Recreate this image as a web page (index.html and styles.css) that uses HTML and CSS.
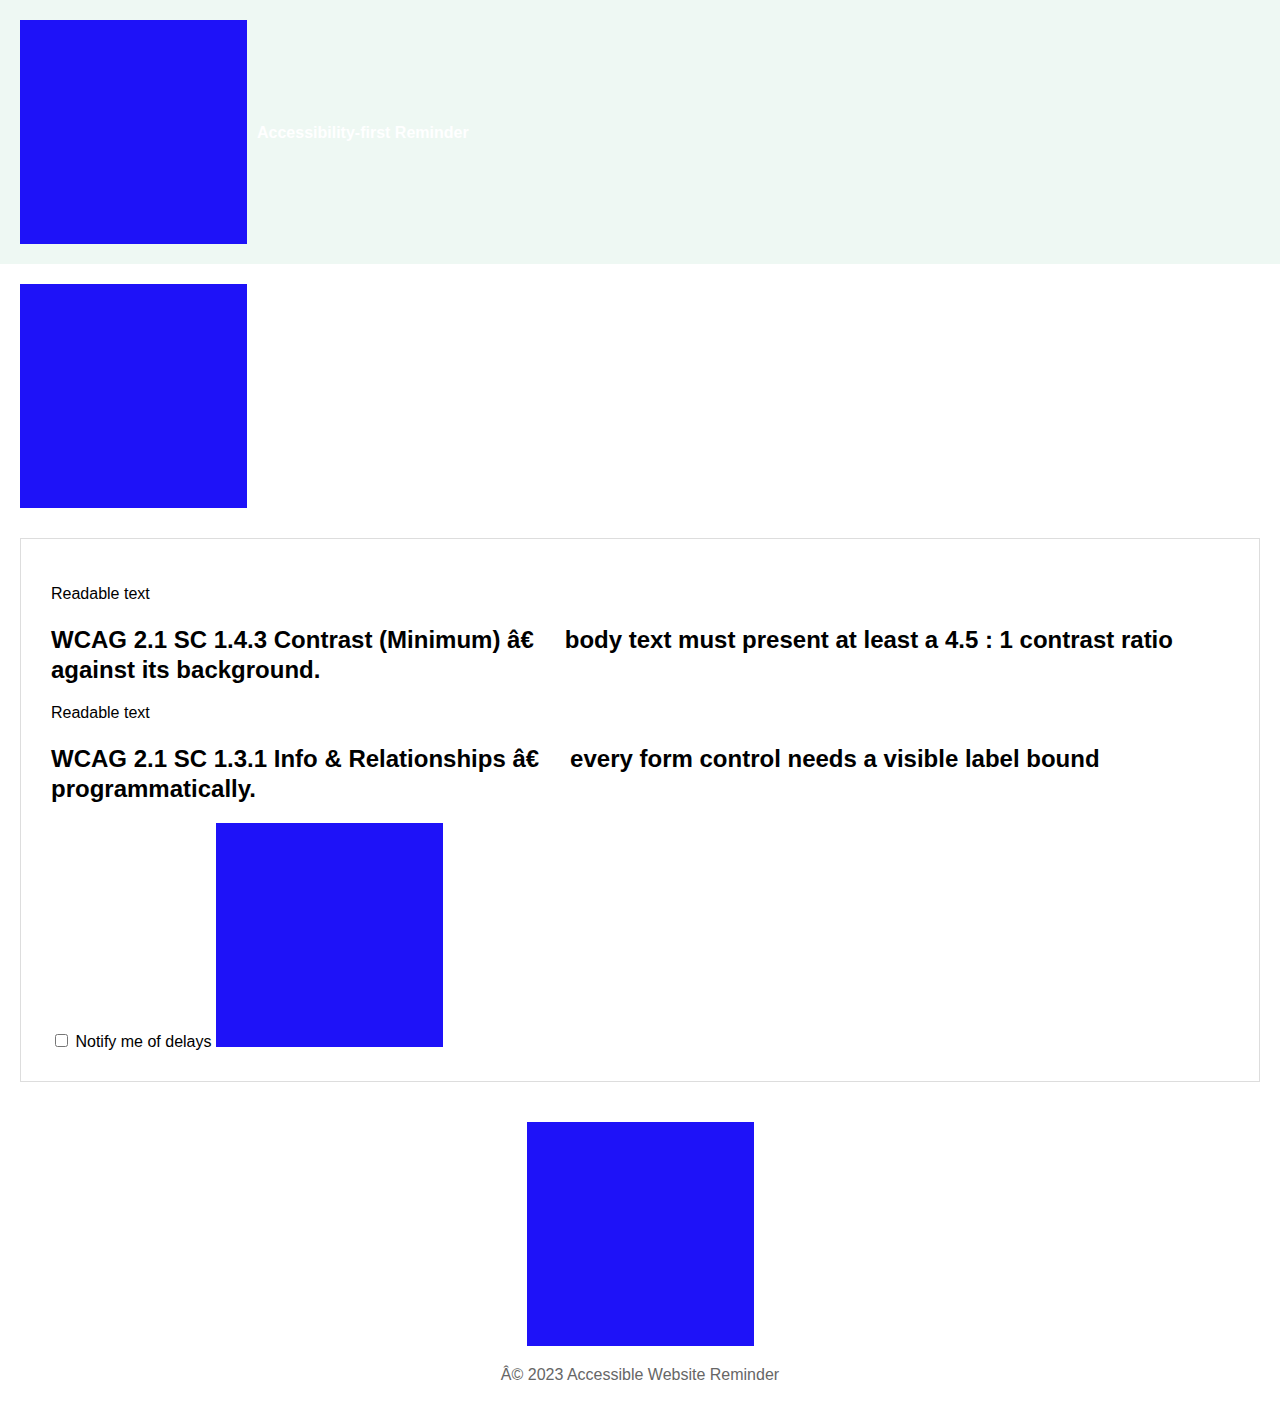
FILE: index.html
```html
<!DOCTYPE html>
<html lang="en">
<head>
<meta charset="utf-8">
<title>Accessible Website Reminder</title>
<link rel="stylesheet" href="styles.css">
</head>
<body>
<header class="site-header">
  <svg class="ph" width="227" height="224" viewBox="0 0 227 224" aria-hidden="true"><rect width="227" height="224" fill="#1e12f8"/></svg>
  <h1 class="title">Accessibility-first Reminder</h1>
</header>
<main class="main">
  <svg class="ph block" width="227" height="224" viewBox="0 0 227 224" aria-hidden="true"><rect width="227" height="224" fill="#1e12f8"/></svg>
  <section class="card">
    <p class="label">Readable text</p>
    <h2 class="rule">WCAG 2.1 SC 1.4.3 Contrast (Minimum) â€<span class="gap"></span>body text must present at least a 4.5 : 1 contrast ratio against its background.</h2>
    <p class="label">Readable text</p>
    <h2 class="rule">WCAG 2.1 SC 1.3.1 Info &amp; Relationships â€<span class="gap"></span>every form control needs a visible label bound programmatically.</h2>
    <p class="check-row"><label class="check"><input type="checkbox" class="cb"> Notify me of delays</label> <svg class="ph" width="227" height="224" viewBox="0 0 227 224" aria-hidden="true"><rect width="227" height="224" fill="#1e12f8"/></svg></p>
  </section>
</main>
<footer class="site-footer">
  <svg class="ph" width="227" height="224" viewBox="0 0 227 224" aria-hidden="true"><rect width="227" height="224" fill="#1e12f8"/></svg>
  <p class="copy">Â© 2023 Accessible Website Reminder</p>
</footer>
</body>
</html>
```
FILE: styles.css
```css
html, body {
  margin: 0;
  padding: 0;
  background: #ffffff;
  font-family: "Liberation Sans", Arial, sans-serif;
  font-size: 16px;
  color: #000;
}
.site-header {
  background: #eef8f3;
  padding: 20px;
  display: flex;
  align-items: center;
  gap: 10px;
}
.title {
  margin: 0;
  padding-top: 2px;
  font-size: 16px;
  font-weight: bold;
  color: #ffffff;
}
.ph {
  display: inline-block;
  vertical-align: baseline;
}
.ph.block {
  display: block;
}
.site-header .ph {
  display: block;
}
.main {
  padding: 20px 20px 0;
}
.card {
  margin-top: 30px;
  border: 1px solid #dddddd;
  padding: 30px;
}
.label {
  margin: 16px 0;
}
.rule {
  font-size: 24px;
  font-weight: bold;
  line-height: 30px;
  margin: 20px 0 19px;
  padding-top: 2px;
}
.gap {
  display: inline-block;
  width: 31px;
}
.check-row {
  margin: 18px 0 0;
}
.cb {
  margin: 3px 3px 3px 4px;
  vertical-align: baseline;
}
.site-footer {
  padding: 40px 20px 20px;
  text-align: center;
}
.copy {
  margin: 16px 0 16px;
  color: #666666;
}
```
